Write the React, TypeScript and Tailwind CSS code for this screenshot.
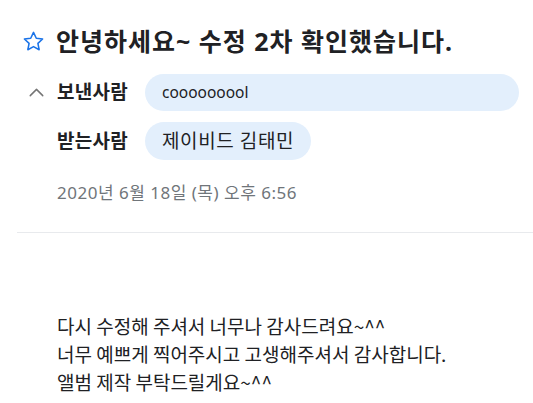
import { ChevronUp } from 'lucide-react';

function Star() {
  return (
    <svg width="23" height="23" viewBox="0 0 24 24" fill="none" stroke="#1a73e8" strokeWidth="1.6" strokeLinejoin="round">
      <path d="M12 2.5l2.9 6.1 6.6.8-4.9 4.6 1.3 6.6L12 17.3l-5.9 3.3 1.3-6.6-4.9-4.6 6.6-.8z" />
    </svg>
  );
}

export default function App() {
  const font = { fontFamily: '"Noto Sans", "Noto Sans CJK KR", sans-serif' };
  const cjk = { fontFamily: '"Noto Sans CJK KR", sans-serif' };
  return (
    <div className="w-[533px] h-[403px] bg-white text-[#202124] overflow-hidden" style={font}>
      <div className="pl-[22px] pt-[26px] flex items-center gap-[11px]">
        <Star />
        <h1 className="text-[25px] font-bold leading-[30px] tracking-[1px]">안녕하세요~ 수정 2차 확인했습니다.</h1>
      </div>

      <div className="pl-[57px] pr-[14px] mt-[18px] flex flex-col gap-[11px]">
        <div className="flex items-center relative">
          <ChevronUp className="absolute left-[-33px] w-[25px] h-[25px] text-[#757575]" strokeWidth={1.4} />
          <span className="text-[19px] font-bold w-[88px] tracking-[0.3px]">보낸사람</span>
          <span className="flex-1 h-[37px] rounded-full bg-[#e3effc] px-[17px] flex items-center text-[15.5px]">
            cooooooool
          </span>
        </div>
        <div className="flex items-center">
          <span className="text-[19px] font-bold w-[88px] tracking-[0.3px]">받는사람</span>
          <span className="h-[38px] rounded-full bg-[#e3effc] px-[17px] flex items-center text-[19px] tracking-[0.6px]">
            제이비드 김태민
          </span>
        </div>
        <div className="text-[17px] text-[#70757a] mt-[9px] tracking-[0.5px]">2020년 6월 18일 (목) 오후 6:56</div>
      </div>

      <div className="ml-[17px] mt-[26px] border-t border-[#e8eaed]" />

      <div className="pl-[57px] pt-[79px] text-[19px] leading-[28px]" style={cjk}>
        <p>다시 수정해 주셔서 너무나 감사드려요~^^</p>
        <p>너무 예쁘게 찍어주시고 고생해주셔서 감사합니다.</p>
        <p>앨범 제작 부탁드릴게요~^^</p>
      </div>
    </div>
  );
}
